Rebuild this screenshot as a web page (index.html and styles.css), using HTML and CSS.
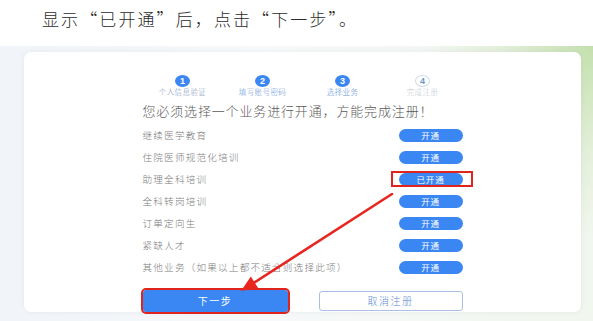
FILE: index.html
```html
<!DOCTYPE html>
<html lang="zh-CN">
<head>
<meta charset="utf-8">
<title>选择业务</title>
<link rel="stylesheet" href="styles.css">
</head>
<body>
<div class="page">
  <div class="caption">显示“已开通”后，点击“下一步”。</div>
  <div class="stage">
    <div class="card">
      <div class="content">
        <div class="steps">
          <div class="step done"><span class="num">1</span><span class="label">个人信息验证</span></div>
          <div class="step done"><span class="num">2</span><span class="label">填写账号密码</span></div>
          <div class="step done"><span class="num">3</span><span class="label">选择业务</span></div>
          <div class="step todo"><span class="num">4</span><span class="label">完成注册</span></div>
        </div>
        <div class="headline">您必须选择一个业务进行开通，方能完成注册！</div>
        <div class="rows">
          <div class="row"><span class="name">继续医学教育</span><span class="open">开通</span></div>
          <div class="row"><span class="name">住院医师规范化培训</span><span class="open">开通</span></div>
          <div class="row"><span class="name">助理全科培训</span><span class="open marked">已开通</span></div>
          <div class="row"><span class="name">全科转岗培训</span><span class="open">开通</span></div>
          <div class="row"><span class="name">订单定向生</span><span class="open">开通</span></div>
          <div class="row"><span class="name">紧缺人才</span><span class="open">开通</span></div>
          <div class="row"><span class="name">其他业务（如果以上都不适合则选择此项）</span><span class="open">开通</span></div>
        </div>
        <div class="actions">
          <span class="btn primary">下一步</span>
          <span class="btn ghost">取消注册</span>
        </div>
      </div>
    </div>
  </div>
  <svg class="arrow" width="593" height="321" viewBox="0 0 593 321">
    <line x1="392" y1="194" x2="254.5" y2="282.4" stroke="#e8251f" stroke-width="2.6" stroke-linecap="round"/>
    <polygon points="241,291 258.2,288.2 250.8,276.6" fill="#e8251f"/>
  </svg>
</div>
</body>
</html>
```

FILE: styles.css
```css
* { box-sizing: border-box; }
html, body { margin: 0; padding: 0; background: #ffffff; }
body { font-family: "Noto Sans CJK SC", "Noto Sans", sans-serif; font-weight: 300; }

.page {
  position: relative;
  width: 593px;
  height: 321px;
  overflow: hidden;
}

.caption {
  height: 46px;
  padding: 8px 0 0 42px;
  font-size: 17px;
  line-height: 22px;
  letter-spacing: 2.1px;
  color: #2a2a2a;
  font-weight: 300;
}

.stage {
  height: 275px;
  padding: 6px 12px 0 24px;
  background:
    radial-gradient(ellipse 170px 190px at 100% 0%, rgba(196, 224, 174, 1), rgba(212, 232, 196, 0.5) 55%, rgba(240, 245, 240, 0) 100%),
    linear-gradient(to right, #f1f4f8 0%, #f7f9fa 45%, #f1f6ee 100%);
}

.card {
  width: 557px;
  background: #ffffff;
  border-radius: 7px;
  box-shadow: 0 0 5px rgba(120, 140, 160, 0.12);
  padding-top: 23px;
}

.content {
  width: 320px;
  margin: 0 auto;
}

.steps {
  display: flex;
}
.step {
  width: 80px;
  display: flex;
  flex-direction: column;
  align-items: center;
}
.num {
  width: 15px;
  height: 12px;
  border-radius: 50%;
  font-size: 9px;
  line-height: 12px;
  text-align: center;
  font-family: "Liberation Sans", sans-serif;
  font-weight: bold;
}
.step.done .num { background: #3a86f2; color: #ffffff; }
.step.todo .num {
  background: #ffffff;
  color: #6f95cf;
  border: 1px solid #cbd8ec;
  line-height: 10px;
}
.label {
  font-size: 7.5px;
  line-height: 10px;
  letter-spacing: 0.4px;
  white-space: nowrap;
}
.step.done .label { color: #5b8ed8; }
.step.done:first-child .label { color: #7b94b8; }
.step.todo .label { color: #c4c9d1; }

.headline {
  margin-top: 5px;
  font-size: 13px;
  line-height: 18px;
  letter-spacing: 0.85px;
  color: #5a5a5a;
  white-space: nowrap;
}

.rows {
  margin-top: 4px;
}
.row {
  height: 22px;
  display: flex;
  align-items: center;
  justify-content: space-between;
}
.name {
  font-size: 9.6px;
  letter-spacing: 1.2px;
  color: #7c7c7c;
  white-space: nowrap;
}
.open {
  position: relative;
  width: 64px;
  height: 13px;
  border-radius: 7px;
  background: #3a86f2;
  color: #ffffff;
  font-size: 8.5px;
  line-height: 13px;
  text-align: center;
  letter-spacing: 0.8px;
  font-weight: 400;
}
.open.marked::after {
  content: "";
  position: absolute;
  left: -8px;
  right: -10px;
  top: -2px;
  bottom: -1px;
  border: 2px solid #e0241d;
}

.actions {
  margin-top: 12px;
  margin-bottom: -15px;
  height: 22px;
  display: flex;
  justify-content: space-between;
  align-items: center;
}
.btn {
  height: 22px;
  border-radius: 3px;
  font-size: 10px;
  line-height: 22px;
  text-align: center;
  letter-spacing: 1.5px;
}
.btn.primary {
  width: 145px;
  background: #3a86f2;
  color: #ffffff;
  outline: 2px solid #e0241d;
  font-weight: 400;
}
.btn.ghost {
  width: 144px;
  height: 20px;
  line-height: 18px;
  background: #ffffff;
  border: 1px solid #a9c0e2;
  color: #5e8ccf;
}

.arrow {
  position: absolute;
  left: 0;
  top: 0;
  pointer-events: none;
}
```
